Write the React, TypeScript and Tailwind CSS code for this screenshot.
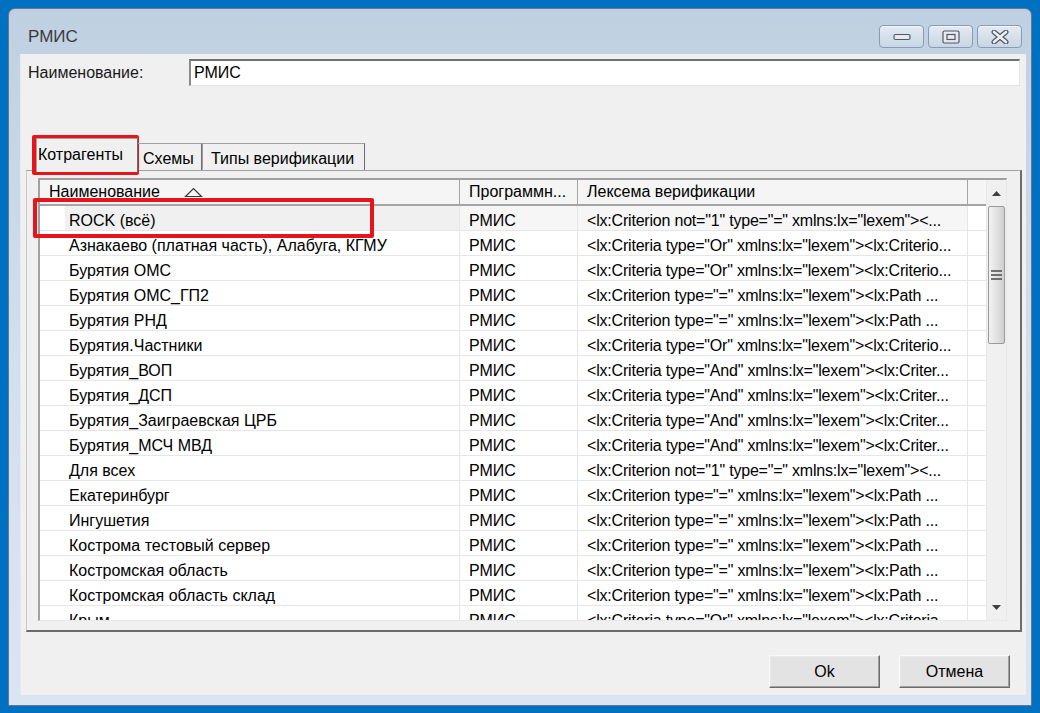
import React from 'react';

const rows: [string, string][] = [
  ['ROCK (всё)', '<lx:Criterion not="1" type="=" xmlns:lx="lexem"><...'],
  ['Азнакаево (платная часть), Алабуга, КГМУ', '<lx:Criteria type="Or" xmlns:lx="lexem"><lx:Criterio...'],
  ['Бурятия ОМС', '<lx:Criteria type="Or" xmlns:lx="lexem"><lx:Criterio...'],
  ['Бурятия ОМС_ГП2', '<lx:Criterion type="=" xmlns:lx="lexem"><lx:Path ...'],
  ['Бурятия РНД', '<lx:Criterion type="=" xmlns:lx="lexem"><lx:Path ...'],
  ['Бурятия.Частники', '<lx:Criteria type="Or" xmlns:lx="lexem"><lx:Criterio...'],
  ['Бурятия_ВОП', '<lx:Criteria type="And" xmlns:lx="lexem"><lx:Criter...'],
  ['Бурятия_ДСП', '<lx:Criteria type="And" xmlns:lx="lexem"><lx:Criter...'],
  ['Бурятия_Заиграевская ЦРБ', '<lx:Criteria type="And" xmlns:lx="lexem"><lx:Criter...'],
  ['Бурятия_МСЧ МВД', '<lx:Criteria type="And" xmlns:lx="lexem"><lx:Criter...'],
  ['Для всех', '<lx:Criterion not="1" type="=" xmlns:lx="lexem"><...'],
  ['Екатеринбург', '<lx:Criterion type="=" xmlns:lx="lexem"><lx:Path ...'],
  ['Ингушетия', '<lx:Criterion type="=" xmlns:lx="lexem"><lx:Path ...'],
  ['Кострома тестовый сервер', '<lx:Criterion type="=" xmlns:lx="lexem"><lx:Path ...'],
  ['Костромская область', '<lx:Criterion type="=" xmlns:lx="lexem"><lx:Path ...'],
  ['Костромская область склад', '<lx:Criterion type="=" xmlns:lx="lexem"><lx:Path ...'],
  ['Крым', '<lx:Criteria type="Or" xmlns:lx="lexem"><lx:Criteria...'],
];

function CaptionButton({ kind }: { kind: 'min' | 'max' | 'close' }) {
  return (
    <div className="w-[45px] h-[23px] rounded-[4px] border border-[#8a9bb0] bg-gradient-to-b from-[#e3ebf4] to-[#c9d6e5] flex items-center justify-center shadow-[inset_0_1px_0_#f4f8fc]">
      {kind === 'min' && (
        <svg width="18" height="8" viewBox="0 0 18 8">
          <rect x="1" y="1.5" width="16" height="5" rx="1.5" fill="#e6eaee" stroke="#4f5966" strokeWidth="1.2" />
        </svg>
      )}
      {kind === 'max' && (
        <svg width="18" height="14" viewBox="0 0 18 14">
          <rect x="1" y="1" width="16" height="12" rx="1.5" fill="#e6eaee" stroke="#4f5966" strokeWidth="1.2" />
          <rect x="5" y="4.5" width="8" height="5" fill="none" stroke="#4f5966" strokeWidth="1.2" />
        </svg>
      )}
      {kind === 'close' && (
        <svg width="18" height="14" viewBox="0 0 18 14">
          <path d="M3 2 L15 12 M15 2 L3 12" stroke="#4f5966" strokeWidth="5" strokeLinecap="round" />
          <path d="M3 2 L15 12 M15 2 L3 12" stroke="#eef1f4" strokeWidth="2.6" strokeLinecap="round" />
        </svg>
      )}
    </div>
  );
}

function DialogButton({ label }: { label: string }) {
  return (
    <button className="w-[111px] h-[33px] bg-[#e3e3e3] border border-t-[#f8f8f8] border-l-[#f8f8f8] border-r-[#6b6b6b] border-b-[#6b6b6b] shadow-[inset_-1px_-1px_0_#a0a0a0,inset_1px_1px_0_#e9e9e9] text-[16px] text-black">
      {label}
    </button>
  );
}

export default function App() {
  return (
    <div className="relative w-[1040px] h-[713px] overflow-hidden bg-[#0070c0] pt-2 pl-2 font-['Liberation_Sans',Arial,sans-serif]">
      {/* window */}
      <div className="w-[1024px] h-[698px] rounded-t-[7px] border border-[#66778c] bg-gradient-to-b from-[#bfd0e2] via-[#d2dfed] to-[#d9e5f2] flex flex-col">
        {/* title bar */}
        <div className="h-[45px] flex items-start">
          <div className="ml-[19px] mt-[18px] text-[17px] leading-[20px] text-[#3a3a3a]">РМИС</div>
          <div className="ml-auto mr-[9px] mt-[16px] flex gap-[4px]">
            <CaptionButton kind="min" />
            <CaptionButton kind="max" />
            <CaptionButton kind="close" />
          </div>
        </div>

        {/* client area */}
        <div className="flex-1 ml-[11px] mr-[5px] mb-[10px] bg-[#f0f0f0] border-l border-[#e4ebf3] flex flex-col text-[16px] text-black">
          {/* name row */}
          <div className="mt-[5px] flex items-center h-[27px]">
            <div className="ml-[7px] w-[161px] text-[#1a1a1a]">Наименование:</div>
            <div className="w-[831px] h-[27px] bg-white border-t-2 border-l-2 border-t-[#6f6f6f] border-l-[#8a8a8a] border-r border-b border-r-[#e3e3e3] border-b-[#e3e3e3] pl-[3px] flex items-center">
              РМИС
            </div>
          </div>

          {/* tabs */}
          <div className="mt-[52px] ml-[5px] w-[996px] flex flex-col">
            <div className="h-[32px] flex items-end pl-[10px] relative z-10">
              <div className="w-[102px] h-[34px] mb-[-2px] bg-[#f0f0f0] border border-b-0 border-[#a0a0a0] border-r-[#6b6b6b] pl-[1px] pt-[4px] text-[16px]">
                Котрагенты
              </div>
              <div className="w-[64px] h-[27px] border-t border-r border-[#a0a0a0] border-r-[#6b6b6b] pl-[5px] pt-[3px]">
                Схемы
              </div>
              <div className="w-[163px] h-[27px] border-t border-r border-l border-[#a0a0a0] border-r-[#6b6b6b] pl-[8px] pt-[3px]">
                Типы верификации
              </div>
            </div>
            {/* tab panel */}
            <div className="h-[462px] border border-t-[#a0a0a0] border-l-[#c8c8c8] border-r-2 border-b-2 border-r-[#6b6b6b] border-b-[#6b6b6b] bg-[#f0f0f0] pt-[7px] pl-[11px]">
              {/* grid */}
              <div className="w-[969px] h-[443px] border-t-2 border-l-2 border-t-[#a0a0a0] border-l-[#a0a0a0] border-r border-b border-r-[#e8e8e8] border-b-[#e8e8e8] bg-white flex">
                <div className="w-[946px] flex flex-col overflow-hidden">
                  {/* header */}
                  <div className="h-[26px] shrink-0 flex bg-[#f5f5f5] border-b-2 border-[#a5a5a5]">
                    <div className="w-[420px] border-r border-[#a5a5a5] pl-[9px] flex items-center">
                      <span>Наименование</span>
                      <svg className="ml-[24px]" width="19" height="11" viewBox="0 0 19 11">
                        <path d="M1.5 9.5 L9.5 1.5 L17.5 9.5 Z" fill="none" stroke="#3a3a3a" strokeWidth="1.2" />
                      </svg>
                    </div>
                    <div className="w-[118px] border-r border-[#a5a5a5] pl-[9px] flex items-center">Программн...</div>
                    <div className="w-[390px] border-r border-[#a5a5a5] pl-[9px] flex items-center">Лексема верификации</div>
                    <div className="w-[18px]" />
                  </div>
                  {/* rows */}
                  {rows.map(([name, lex], i) => (
                    <div key={i} className="h-[25px] shrink-0 flex border-b border-[#e6e6e6]">
                      <div className="w-[25px] bg-white" />
                      <div className={`w-[395px] border-r border-[#e6e6e6] pl-[4px] pt-[5px] flex items-center whitespace-nowrap ${i === 0 ? 'bg-[#f0f0f0]' : ''}`}>{name}</div>
                      <div className={`w-[118px] border-r border-[#e6e6e6] pl-[9px] pt-[5px] flex items-center ${i === 0 ? 'bg-[#f6f6f6]' : ''}`}>РМИС</div>
                      <div className={`w-[390px] border-r border-[#e6e6e6] pl-[9px] pt-[5px] flex items-center whitespace-nowrap overflow-hidden tracking-[-0.2px] ${i === 0 ? 'bg-[#f6f6f6]' : ''}`}>{lex}</div>
                      <div className="w-[18px]" />
                    </div>
                  ))}
                </div>
                {/* scrollbar */}
                <div className="w-[20px] bg-[#f0f0f0] flex flex-col border-l border-[#e8e8e8]">
                  <div className="h-[26px] flex items-center justify-center">
                    <svg width="9" height="5" viewBox="0 0 9 5"><path d="M0 5 L4.5 0 L9 5 Z" fill="#404040" /></svg>
                  </div>
                  <div className="h-[138px] mx-[1px] rounded-[2px] border border-[#9a9a9a] bg-gradient-to-r from-[#f2f2f2] via-[#e2e2e2] to-[#cfcfcf] flex items-center justify-center">
                    <svg width="11" height="10" viewBox="0 0 11 10">
                      <path d="M0 1 H11 M0 5 H11 M0 9 H11" stroke="#4a4a4a" strokeWidth="1.6" />
                    </svg>
                  </div>
                  <div className="flex-1" />
                  <div className="h-[26px] flex items-center justify-center">
                    <svg width="9" height="5" viewBox="0 0 9 5"><path d="M0 0 L4.5 5 L9 0 Z" fill="#404040" /></svg>
                  </div>
                </div>
              </div>
            </div>
          </div>

          {/* buttons */}
          <div className="mt-[23px] mr-[16px] flex justify-end gap-[19px]">
            <DialogButton label="Ok" />
            <DialogButton label="Отмена" />
          </div>
        </div>
      </div>

      {/* red annotation frames */}
      <div className="absolute left-[32px] top-[135px] w-[107px] h-[40px] border-[4px] border-[#e8141b] rounded-[2px]" />
      <div className="absolute left-[33px] top-[198px] w-[341px] h-[40px] border-[4px] border-[#e8141b] rounded-[2px]" />
    </div>
  );
}
